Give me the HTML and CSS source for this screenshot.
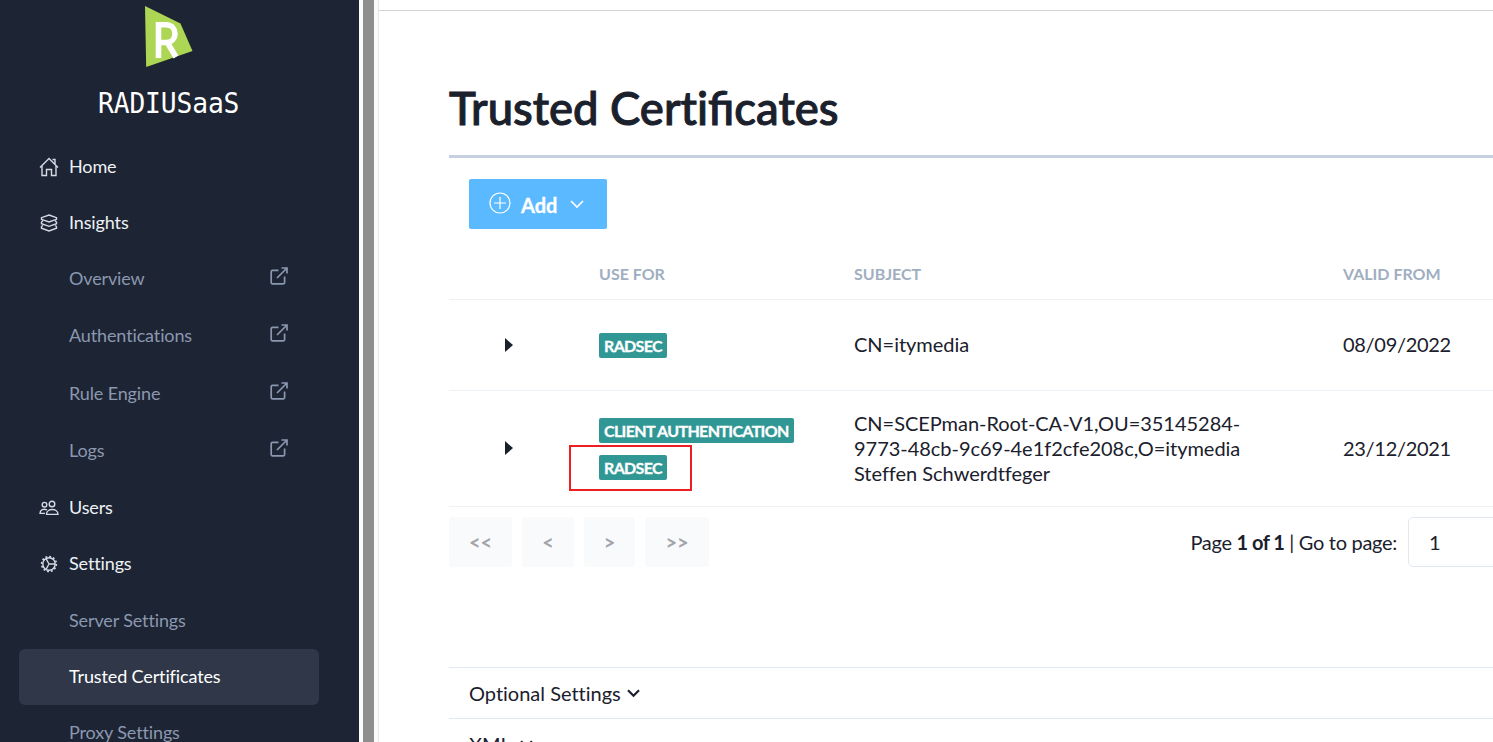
FILE: index.html
```
<!DOCTYPE html>
<html lang="en">
<head>
<meta charset="utf-8">
<title>RADIUSaaS - Trusted Certificates</title>
<link rel="stylesheet" href="styles.css">
</head>
<body>
<svg class="defs" width="0" height="0">
  <symbol id="external" viewBox="0 0 18 18"><path d="M8.500 3.400H2.600a1.400 1.400 0 0 0-1.400 1.400V15.400a1.400 1.400 0 0 0 1.400 1.400H13.200a1.400 1.400 0 0 0 1.400-1.400V9.500M11.500 1h5.500v5.500M17 1L7 11"/></symbol>
</svg>
<div class="app">
  <aside class="sidebar">
    <div class="brand">
      <svg class="logo" width="50" height="62" viewBox="0 0 50 62">
        <path d="M1 0L36.500 17.500 48.500 45 2.200 61z" fill="#acd653"/>
        <path d="M14.500 52V18.800h7.500c12 0 12 17.700 0 17.700H14.500M23 36l9 15" fill="none" stroke="#fff" stroke-width="5.600"/>
      </svg>
      <div class="name">RADIUSaaS</div>
    </div>
    <nav class="nav">
      <a class="item"><svg class="icon" viewBox="0 0 20 20"><path d="M1 10.500L10 1.500l9 9M3 9v9.500h4.500V12.500h5V18.500H17V9M13.500 2.500h2.500V7"/></svg><span>Home</span></a>
      <a class="item"><svg class="icon" viewBox="0 0 20 20"><path d="M10 2l7.500 2.700v1.600L10 9 2.500 6.300V4.700zM2.500 8.700v2L10 13.300l7.500-2.600v-2M2.500 8.700l1.500-.7M17.500 8.700L16 8M2.500 13.300v1.900L10 18l7.500-2.800v-1.900M2.500 13.300l1.500-.8M17.500 13.300l-1.500-.8"/></svg><span>Insights</span></a>
      <a class="item sub"><span>Overview</span><svg class="ext"><use href="#external"/></svg></a>
      <a class="item sub gap1"><span>Authentications</span><svg class="ext"><use href="#external"/></svg></a>
      <a class="item sub gap2"><span>Rule Engine</span><svg class="ext"><use href="#external"/></svg></a>
      <a class="item sub gap1"><span>Logs</span><svg class="ext"><use href="#external"/></svg></a>
      <a class="item gap1"><svg class="icon" viewBox="0 0 20 20"><circle cx="5.500" cy="6.700" r="2.300"/><circle cx="13" cy="6" r="2.800"/><path d="M7.500 16.400c0-6.500 11.500-6.500 11.500 0zM6 15.400H1c0-4 3.500-5 7-3.600"/></svg><span>Users</span></a>
      <a class="item"><svg class="icon" viewBox="0 0 20 20"><circle cx="10" cy="10" r="6.200"/><circle cx="10" cy="10" r="7.400" stroke-dasharray="1.900 1.970" stroke-width="1.600"/><path d="M10 10h6M10 10L7 4.700M10 10l-3 5.300"/></svg><span>Settings</span></a>
      <a class="item sub gap1"><span>Server Settings</span></a>
      <a class="item sub active"><span>Trusted Certificates</span></a>
      <a class="item sub"><span>Proxy Settings</span></a>
    </nav>
  </aside>
  <div class="divider"></div>
  <main class="main">
    <div class="topbar"></div>
    <div class="content">
      <h1>Trusted Cer<span class="plain">t</span>ificates</h1>
      <div class="toolbar">
        <button class="add">
          <svg width="22" height="22" viewBox="0 0 22 22"><circle cx="11" cy="11" r="10"/><path d="M11 5v12M5 11h12"/></svg>
          <span>Add</span>
          <svg class="chev" width="14" height="9" viewBox="0 0 14 9"><path d="M1 1l6 6 6-6"/></svg>
        </button>
      </div>
      <div class="row head"><span></span><span>USE FOR</span><span>SUBJECT</span><span>VALID FROM</span></div>
      <div class="row first">
        <span class="arrow"></span>
        <span class="tags"><b class="tag">RADSEC</b></span>
        <span class="subject">CN=itymedia</span>
        <span class="date">08/09/2022</span>
      </div>
      <div class="row second">
        <span class="arrow"></span>
        <span class="tags"><b class="tag long">CLIENT AUTHENTICATION</b><b class="tag marked">RADSEC</b></span>
        <span class="subject">CN=SCEPman-Root-CA-V1,OU=35145284-<br>9773-48cb-9c69-4e1f2cfe208c,O=itymedia<br>Steffen Schwerdtfeger</span>
        <span class="date">23/12/2021</span>
      </div>
      <div class="pager">
        <button class="page w63">&lt;&lt;</button><button class="page w52">&lt;</button><button class="page w51">&gt;</button><button class="page w64">&gt;&gt;</button>
        <div class="goto"><span>Page <b>1 of 1</b> | Go to page:</span><div class="input">1</div></div>
      </div>
      <div class="options">
        <div class="option"><span>Optional Settings</span><svg width="13" height="9" viewBox="0 0 13 9"><path d="M1 1.200l5.500 5.500L12 1.200"/></svg></div>
        <div class="option"><span>XML</span><svg width="13" height="9" viewBox="0 0 13 9"><path d="M1 1.200l5.500 5.500L12 1.200"/></svg></div>
      </div>
    </div>
  </main>
</div>
</body>
</html>
```
FILE: styles.css
```
*, *::after { box-sizing: border-box; }
body { margin: 0; height: 742px; overflow: hidden; background: #fff; color: #1a202c; font: 20px/25px Lato, sans-serif; font-variant-ligatures: none; }
button { border: 0; font: inherit; }
.defs { position: absolute; }
.app { display: flex; height: 742px; overflow: hidden; }
.sidebar { width: 359px; flex: none; height: 742px; background: #1d2433; overflow: hidden; }
.brand { height: 139px; padding-top: 6px; }
.logo { display: block; margin-left: 144px; }
.name { margin: 21px 0 0 98px; color: #fff; font: 27px/28px "DejaVu Sans Mono", monospace; white-space: nowrap; transform: scale(.975, 1.06); transform-origin: left; letter-spacing: -.15px; }
.nav { padding: 0 40px 0 19px; }
.item { display: flex; align-items: center; height: 56px; padding-left: 20px; border-radius: 6px; color: #edf2f7; font-size: 18px; }
.item span { flex: 1; padding: 0 0 2px 10px; letter-spacing: -.13px; }
.sub { padding-left: 40px; color: #8b98b0; }
.gap1 { margin-top: 1px; }
.gap2 { margin-top: 2px; }
.active { background: #2f3748; color: #fff; }
.icon { width: 20px; height: 20px; fill: none; stroke: #d5dbe5; stroke-width: 1.400; }
.ext { width: 18px; height: 18px; margin: 0 31px 6px 0; fill: none; stroke: #8b98b0; stroke-width: 1.700; }
.divider { width: 19px; flex: none; background: #8e8e8e; border: solid #fbfbfb; border-width: 0 4px; }
.main { flex: 1; min-width: 0; border-left: 1px solid #e2e8f0; }
.topbar { height: 11px; border-bottom: 1px solid #d2d3d5; }
.content { padding-left: 70px; }
h1 { height: 147px; margin: 0; padding-top: 70px; border-bottom: 3px solid #c6d0de; font-size: 45.400px; line-height: 54px; font-weight: 500; white-space: nowrap; -webkit-text-stroke: 1px #1a202c; font-variant-ligatures: normal; }
.plain { font-variant-ligatures: none; }
.toolbar { padding: 21px 20px; height: 92px; }
.add { display: flex; align-items: center; width: 138px; height: 50px; padding: 0 20px; border-radius: 2px; background: #5bb9ff; color: #fff; font-weight: 700; }
.add svg { fill: none; stroke: #fff; stroke-width: 1.200; margin-bottom: 2px; }
.add span { margin-left: 10px; padding-top: 2px; width: 49px; text-align: left; -webkit-text-stroke: .3px #fff; }
.add .chev { stroke-width: 1.700; margin-bottom: 0; }
.row { display: grid; grid-template-columns: 150px 255px 489px 1fr; align-items: center; border-bottom: 1px solid #edf2f7; white-space: nowrap; }
.head { height: 50px; padding-bottom: 2px; color: #a0aec0; font-size: 16px; font-weight: 700; }
.first { height: 91px; }
.first .subject, .first .date { padding-bottom: 2px; }
.second { height: 116px; }
.second .arrow { margin-bottom: 2px; }
.subject { letter-spacing: -.03px; }
.date { letter-spacing: -.3px; }
.arrow { width: 0; height: 0; margin-left: 56px; border: solid transparent; border-width: 7px 0 7px 8px; border-left-color: #1a202c; }
.tags { display: flex; flex-direction: column; align-items: flex-start; gap: 12px; }
.tag { position: relative; width: 68px; height: 25px; padding-left: 5px; border-radius: 2px; background: #319795; color: #fff; font-size: 16px; line-height: 25px; font-weight: 700; letter-spacing: -.65px; -webkit-text-stroke: .3px #fff; }
.long { width: 195px; }
.marked::after { content: ""; position: absolute; left: -30px; top: -10px; width: 123px; height: 46px; border: 2px solid #ec2024; }
.pager { display: flex; height: 60px; padding-top: 10px; gap: 10px; }
.page { height: 50px; padding: 0; border-radius: 3px; background: #f9fafc; color: #a2a4a9; font-weight: 700; }
.w63 { width: 63px; } .w52 { width: 52px; } .w51 { width: 51px; } .w64 { width: 64px; }
.goto { display: flex; align-items: center; margin-left: auto; white-space: nowrap; letter-spacing: -.3px; }
.goto b { letter-spacing: -.5px; }
.input { width: 100px; height: 50px; margin: 0 -15px 0 11px; padding: 12px 20px; border: 1px solid #e2e8f0; border-radius: 5px; }
.options { margin-top: 100px; }
.option { display: flex; align-items: center; height: 51px; padding-left: 20px; border-top: 1px solid #e2e8f0; }
.option svg { margin-left: 6px; fill: none; stroke: #1a202c; stroke-width: 2.200; }
.option + .option svg { margin-left: 9px; }
```
